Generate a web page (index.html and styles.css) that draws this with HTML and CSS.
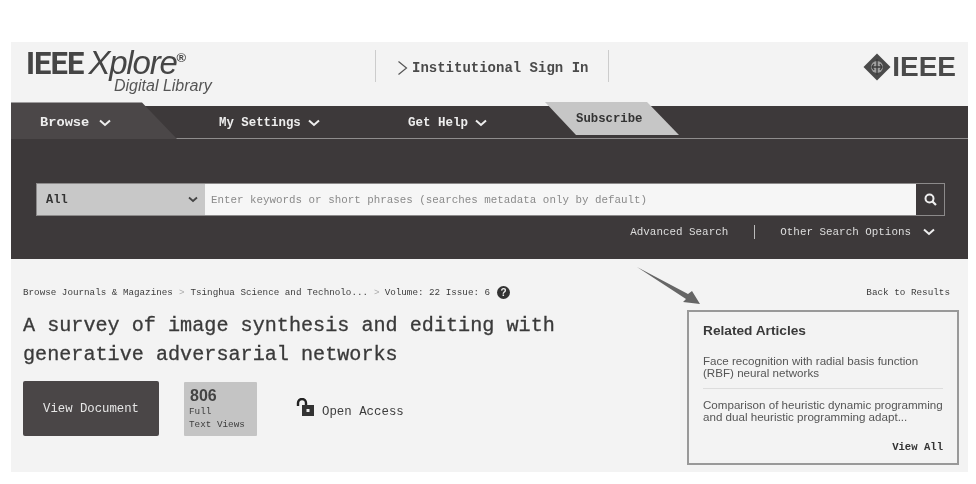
FILE: index.html
```html
<!DOCTYPE html>
<html lang="en">
<head>
<meta charset="utf-8">
<title>IEEE Xplore</title>
<link rel="stylesheet" href="styles.css">
</head>
<body>
<div class="page">
  <header class="top">
    <div class="logo">
      <div class="logo-main"><span class="logo-ieee">IEEE</span><span class="logo-x">Xplore</span><span class="logo-r">®</span></div>
      <div class="logo-sub">Digital Library</div>
    </div>
    <div class="signin">
      <svg class="signin-chev" width="11" height="16" viewBox="0 0 11 16"><path d="M1.500 1.500 9.500 8l-8 6.500" fill="none" stroke="#555" stroke-width="1.200"/></svg>
      <span>Institutional Sign In</span>
    </div>
    <div class="brand">
      <svg width="28" height="28" viewBox="0 0 28 28"><path d="M14 0.500 27.500 14 14 27.500 0.500 14Z" fill="#4a4a4a"/><circle cx="14" cy="14" r="6" fill="#a0a0a0"/><path d="M14 6v16M9 14h10M11 11l-2 3 2 3M17 11l2 3-2 3" fill="none" stroke="#3a3a3a" stroke-width="1.300"/></svg>
      <span class="brand-text">IEEE</span>
    </div>
  </header>
  <nav class="nav">
    <svg class="tab-shape tab-browse" width="166" height="37" viewBox="0 0 166 37"><path d="M0 0.500H131L166 37H0Z" fill="#4b4748"/></svg>
    <svg class="tab-shape tab-sub" width="135" height="34" viewBox="0 0 135 34"><path d="M0 0H102L134 33H31Z" fill="#c6c6c6"/></svg>
    <a class="nav-item nav-browse">Browse<svg class="chev" width="12" height="8" viewBox="0 0 12 8"><path d="M1 1.500 6 6l5-4.500" fill="none" stroke="#eee" stroke-width="2"/></svg></a>
    <a class="nav-item nav-settings">My Settings<svg class="chev" width="12" height="8" viewBox="0 0 12 8"><path d="M1 1.500 6 6l5-4.500" fill="none" stroke="#eee" stroke-width="2"/></svg></a>
    <a class="nav-item nav-help">Get Help<svg class="chev" width="12" height="8" viewBox="0 0 12 8"><path d="M1 1.500 6 6l5-4.500" fill="none" stroke="#eee" stroke-width="2"/></svg></a>
    <a class="nav-sub">Subscribe</a>
  </nav>
  <section class="search">
    <div class="search-bar">
      <div class="scope"><span>All</span><svg width="10" height="7" viewBox="0 0 10 7"><path d="M1 1.500 5 5l4-3.500" fill="none" stroke="#444" stroke-width="1.800"/></svg></div>
      <div class="query">Enter keywords or short phrases (searches metadata only by default)</div>
      <div class="go"><svg width="13" height="13" viewBox="0 0 13 13"><circle cx="5.500" cy="5.500" r="4" fill="none" stroke="#eee" stroke-width="2"/><path d="m8.500 8.500 3.500 3.500" stroke="#eee" stroke-width="2.200"/></svg></div>
    </div>
    <div class="search-links">
      <span>Advanced Search</span>
      <i class="divider"></i>
      <span>Other Search Options</span>
      <svg width="12" height="8" viewBox="0 0 12 8"><path d="M1 1.500 6 6l5-4.500" fill="none" stroke="#eee" stroke-width="2"/></svg>
    </div>
  </section>
  <main class="main">
    <div class="crumbs">
      <span>Browse Journals &amp; Magazines</span><span class="sep">&gt;</span><span>Tsinghua Science and Technolo...</span><span class="sep sep-last">&gt;</span><span>Volume: 22 Issue: 6</span>
      <span class="help">?</span>
      <span class="back">Back to Results</span>
    </div>
    <div class="body">
      <div class="left">
        <h1 class="title">A survey of image synthesis and editing with generative adversarial networks</h1>
        <div class="actions">
          <a class="view-doc">View Document</a>
          <div class="metric"><b>806</b><span>Full<br>Text Views</span></div>
          <div class="access">
            <svg width="19" height="19" viewBox="0 0 19 19"><path d="M2 8V5a4 4 0 0 1 8 0v2" fill="none" stroke="#222" stroke-width="2.400"/><path d="M6 7h12v11H6Z" fill="#333"/><rect x="10.500" y="11" width="3" height="3" fill="#eee"/></svg>
            <span>Open Access</span>
          </div>
        </div>
      </div>
      <aside class="related">
        <h2>Related Articles</h2>
        <p class="rel-item rel-first">Face recognition with radial basis function<br>(RBF) neural networks</p>
        <p class="rel-item">Comparison of heuristic dynamic programming<br>and dual heuristic programming adapt...</p>
        <a class="view-all">View All</a>
      </aside>
    </div>
    <svg class="arrow" width="66" height="40" viewBox="0 0 66 40"><path d="M1 1 52 28 56 25 64 38 47 36 50 33Z" fill="#666"/></svg>
  </main>
</div>
</body>
</html>
```
FILE: styles.css
```css
* { box-sizing: border-box; }
html, body { margin: 0; background: #fff; }
body { width: 976px; height: 484px; overflow: hidden; font-family: "Liberation Mono", monospace; color: #3d3d3d; }
.page { margin: 42px 8px 0 11px; width: 957px; height: 430px; background: #f3f3f3; filter: blur(0.4px); display: flex; flex-direction: column; }

.top { height: 64px; display: flex; align-items: flex-start; padding: 0 12px 0 15px; position: relative; }
.logo { width: 349px; padding-top: 5px; }
.logo-main { display: flex; align-items: baseline; height: 32px; line-height: 32px; color: #454545; }
.logo-ieee { font: bold 31px/32px Roboto, "Liberation Sans", sans-serif; letter-spacing: -1px; margin-right: 5px; }
.logo-x { font: italic 33px/32px "Liberation Sans", sans-serif; letter-spacing: -1.200px; }
.logo-r { font: bold 13px/14px "Liberation Sans", sans-serif; align-self: flex-start; margin-top: 4px; }
.logo-sub { font: italic 16px/13px "Liberation Sans", sans-serif; margin: 0 0 0 88px; color: #555; white-space: nowrap; }
.signin { width: 234px; height: 32px; margin-top: 8px; border: solid #ccc; border-width: 0 1px; display: flex; align-items: center; padding: 3px 0 0 21px; font-size: 14px; font-weight: bold; color: #4a4a4a; gap: 4px; }
.signin-chev { flex: none; }
.brand { margin-left: auto; margin-top: 11px; display: flex; align-items: center; gap: 1px; color: #4a4a4a; }
.brand-text { font: bold 28px/28px "Liberation Sans", sans-serif; }

.nav { height: 33px; background: #3d393a; border-bottom: 1px solid #8f8d8d; display: flex; align-items: center; padding: 1px 0 0 29px; position: relative; color: #eee; font-size: 12.500px; font-weight: bold; }
.tab-shape { position: absolute; display: block; }
.tab-browse { left: 0; top: -4px; }
.tab-sub { left: 534px; top: -4px; }
.nav-item { position: relative; display: flex; align-items: center; gap: 7px; white-space: pre; }
.nav-browse { width: 179px; font-size: 13.700px; gap: 10px; }
.nav-settings { width: 189px; font-size: 12.400px; }
.nav-sub { position: absolute; left: 565px; top: 3px; font-size: 12.300px; color: #333; line-height: 20px; }

.search { height: 120px; background: #3d393a; padding: 44px 23px 0 25px; color: #ddd; }
.search-bar { height: 33px; display: flex; border: 1px solid #8c8a8a; }
.scope { width: 168px; background: #c8c8c8; display: flex; align-items: center; justify-content: space-between; padding: 0 7px 0 9px; font-size: 12px; font-weight: bold; color: #333; }
.query { flex: 1; background: #f6f6f6; padding-left: 6px; display: flex; align-items: center; font-size: 10.850px; color: #8a8a8a; white-space: nowrap; }
.go { width: 28px; display: flex; align-items: center; justify-content: center; background: #3d393a; }
.search-links { display: flex; align-items: center; justify-content: flex-end; height: 16px; margin-top: 8px; padding-right: 10px; font-size: 10.900px; }
.divider { width: 1px; height: 14px; background: #bbb; margin: 0 25px 0 26px; }
.search-links svg { margin-left: 12px; }

.main { flex: 1; position: relative; padding: 26px 18px 0 12px; }
.crumbs { display: flex; align-items: center; height: 15px; font-size: 9.250px; white-space: nowrap; color: #3d3d3d; }
.sep { margin: 0 6px; color: #aaa; }
.sep-last { margin-right: 5px; }
.help { width: 13px; height: 13px; border-radius: 50%; background: #333; color: #eee; font: bold 10px/13px "Liberation Sans", sans-serif; text-align: center; margin-left: 7px; }
.back { margin-left: auto; font-size: 9.300px; }
.body { display: flex; justify-content: space-between; margin-right: -9px; }
.left { width: 560px; }
.title { margin: 11px 0 0; font-size: 20.150px; line-height: 29px; font-weight: normal; color: #3a3a3a; -webkit-text-stroke: 0.3px #3a3a3a; }
.actions { display: flex; align-items: flex-start; margin-top: 12px; }
.view-doc { width: 136px; height: 55px; background: #4a4647; border-radius: 2px; color: #e6e6e6; font-size: 12.300px; display: flex; align-items: center; justify-content: center; }
.metric { width: 73px; height: 54px; margin: 1px 0 0 25px; background: #c4c4c4; border-radius: 1px; padding: 6px 5px 0; display: flex; flex-direction: column; font-size: 9.300px; line-height: 12.500px; }
.metric b { font: bold 16px/18px "Liberation Sans", sans-serif; margin: -1px 0 1px 1px; color: #444; }
.access { display: flex; align-items: flex-start; gap: 7px; margin: 17px 0 0 39px; font-size: 12.400px; }
.access span { margin-top: 7px; }
.related { width: 272px; height: 155px; margin-top: 10px; border: 2px solid #999; padding: 10px 14px 0 14px; font-family: "Liberation Sans", sans-serif; color: #555; position: relative; flex: none; }
.related h2 { margin: 0 0 15px; font-size: 13.700px; line-height: 18px; font-weight: bold; color: #3a3a3a; }
.rel-item { margin: 0; font-size: 11.600px; line-height: 12px; white-space: nowrap; }
.rel-first { padding-bottom: 9px; border-bottom: 1px solid #ddd; margin-bottom: 10px; }
.view-all { display: block; text-align: right; margin-top: 17px; font: bold 10.600px/14px "Liberation Mono", monospace; color: #333; }
.arrow { position: absolute; left: 625px; top: 7px; }
```
